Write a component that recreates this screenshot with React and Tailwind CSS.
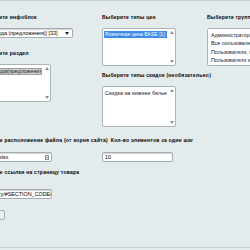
import React from 'react'

const label = "font-bold text-[5px] tracking-[0.25px] leading-[7px] text-black whitespace-nowrap"
const field = "bg-white border border-[#a3acb1] rounded-[2px] shadow-[inset_0_1px_1px_rgba(160,170,175,0.5)]"

function Arrow({ up }) {
  return (
    <svg width="4" height="3" viewBox="0 0 4 3" className="block">
      <path d={up ? 'M0 3 L2 0 L4 3 Z' : 'M0 0 L2 3 L4 0 Z'} fill="#8a9296" />
    </svg>
  )
}

function ListBox({ className, children, scroll = true }) {
  return (
    <div className={`flex bg-white border border-[#aab3b7] rounded-[2px] overflow-hidden ${className}`}>
      <div className="flex-1 min-w-0 p-[1px] text-[5.4px] leading-[7px] text-[#222]">{children}</div>
      {scroll && (
        <div className="w-[7px] flex flex-col justify-between items-center py-[2px]">
          <Arrow up />
          <Arrow />
        </div>
      )}
    </div>
  )
}

export default function App() {
  return (
    <div className="w-[250px] h-[250px] overflow-hidden bg-[#e4ebed] font-['Liberation_Sans',Arial,sans-serif]">
      <div className="h-[248px] border-t border-b border-[#c6cfd2] overflow-hidden">
        <div className="-ml-[19px] pt-[13px]">
          <div className="flex items-start">
            {/* column 1 */}
            <div className="w-[121px] shrink-0">
              <div className={label}>Выберите инфоблок</div>
              <div className={`${field} mt-[7px] w-[92px] h-[10px] flex items-center pl-[5px] pr-[3px]`}>
                <span className="flex-1 text-[5.4px] leading-[7px] whitespace-nowrap overflow-hidden">Одежда (предложения)] [33]</span>
                <svg width="4" height="3" viewBox="0 0 4 3"><path d="M0 0 L2 3 L4 0 Z" fill="#222" /></svg>
              </div>
              <div className={`${label} mt-[12px]`}>Выберите раздел</div>
              <ListBox className="mt-[7px] w-[70px] h-[38px]">
                <div className="pt-[2px]">
                  <div className="bg-[#cfcfcf] border border-[#a0a0a0] pl-[3px] whitespace-nowrap leading-[5px] overflow-hidden">Одежда(предложения)</div>
                </div>
              </ListBox>
            </div>

            {/* column 2 */}
            <div className="w-[105px] shrink-0">
              <div className={label}>Выберите типы цен</div>
              <ListBox className="mt-[7px] w-[74px] h-[38px]">
                <div className="pt-[1px]">
                  <div className="bg-[#3b8de6] text-white text-[5.1px] pl-[1px] whitespace-nowrap overflow-hidden">Розничная цена BASE [1]</div>
                </div>
              </ListBox>
              <div className={`${label} mt-[6px]`}>Выберите типы скидок (необязательно)</div>
              <ListBox className="mt-[7px] w-[74px] h-[41px]">
                <div className="pt-[2px] pl-[1px] whitespace-nowrap">Скидка на нижнее белье</div>
              </ListBox>
            </div>

            {/* column 3 */}
            <div className="w-[100px] shrink-0">
              <div className={label}>Выберите группы пользователей</div>
              <ListBox className="mt-[7px] w-[74px] h-[38px]" scroll={false}>
                <div className="pl-[2px] pt-[1px] leading-[8.4px] whitespace-nowrap">
                  <div>Администраторы</div>
                  <div>Все пользователи</div>
                  <div>Пользователи, имеющие право</div>
                  <div>Пользователи имеющие право</div>
                </div>
              </ListBox>
            </div>
          </div>

          {/* bottom section */}
          <div className="mt-[10px] flex gap-[3px]">
            <div className={`${label} tracking-[-0.15px]`}>Укажите расположение файла (от корня сайта)</div>
            <div className={label}>Кол-во элементов за один шаг</div>
          </div>
          <div className="mt-[8px] flex">
            <div className="w-[121px] shrink-0">
              <div className={`${field} w-[71px] h-[10px] flex items-center pl-[4px] pr-[2px]`}>
                <span className="flex-1 text-[5.4px] leading-[7px] whitespace-nowrap overflow-hidden">price.xlsx</span>
                <span className="w-[4px] h-[5px] border border-[#8a9296] bg-[#f4f4f4] flex items-center justify-center">
                  <span className="w-[2px] h-[1px] bg-[#8a9296]" />
                </span>
              </div>
            </div>
            <div className={`${field} w-[71px] h-[10px] flex items-center pl-[2px] text-[5.4px] leading-[7px]`}>10</div>
          </div>
          <div className={`${label} mt-[7px]`}>Укажите ссылки на страницу товара</div>
          <div className={`${field} mt-[13px] w-[71px] h-[10px] flex items-center pl-[5px] overflow-hidden`}>
            <span className="text-[5.4px] leading-[7px] whitespace-nowrap">/library/#SECTION_CODE#/#ELEMENT_CODE#/</span>
          </div>
          <button className="mt-[3px] w-[24px] h-[10px] bg-[#eef1f2] border border-[#a3acb1] rounded-[2px] text-[5px] leading-[7px] text-transparent">Выбор</button>
        </div>
      </div>
    </div>
  )
}
